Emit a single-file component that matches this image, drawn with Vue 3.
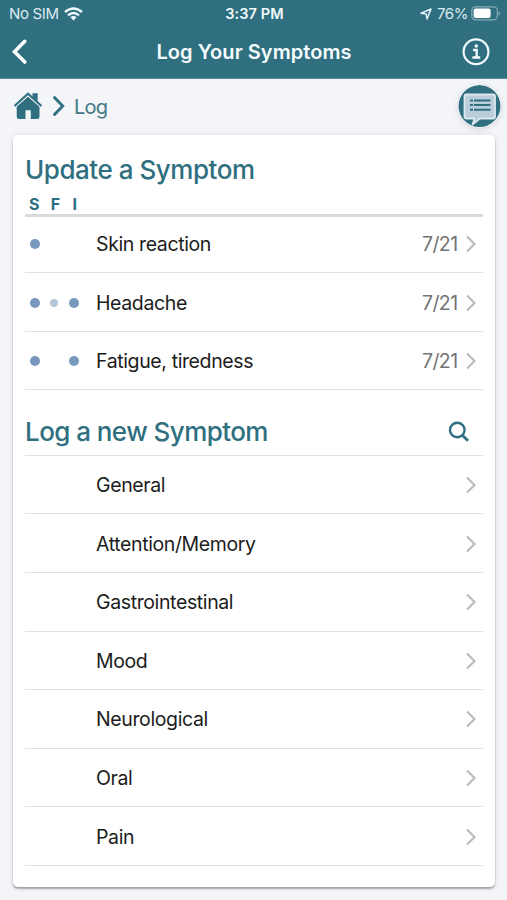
<script setup>
const recent = [
  { name: 'Skin reaction', date: '7/21', dots: ['large', '', ''] },
  { name: 'Headache', date: '7/21', dots: ['large', 'small', 'large'] },
  { name: 'Fatigue, tiredness', date: '7/21', dots: ['large', '', 'large'] }
]
const categories = ['General', 'Attention/Memory', 'Gastrointestinal', 'Mood', 'Neurological', 'Oral', 'Pain']
</script>

<template>
  <div class="screen">
    <header class="top">
      <div class="status">
        <div class="carrier">
          <span class="sim">No SIM</span>
          <svg class="wifi" width="19" height="14" viewBox="0 0 19 14" fill="none" stroke="#f2fbff" stroke-width="2.4">
            <path d="M1 5Q9.5-2.2 18 5" />
            <path d="M4 8.3Q9.500 3.500 15 8.300" />
            <path d="M6.400 10.200Q9.500 7.600 12.600 10.200L9.500 13.500Z" fill="#f2fbff" stroke="none" />
          </svg>
        </div>
        <span class="clock">3:37 PM</span>
        <div class="power">
          <svg class="arrow" width="12" height="12" viewBox="0 0 12 12" fill="none" stroke="#e4f3f7" stroke-width="1.5" stroke-linejoin="round">
            <path d="M1 5.300L11 1L7 11L6.200 5.900Z" />
          </svg>
          <span class="percent">76%</span>
          <svg class="battery" width="30" height="15" viewBox="0 0 30 15">
            <rect x=".8" y=".8" width="25.500" height="13" rx="3.600" fill="none" stroke="#86aab5" stroke-width="1.200" />
            <rect x="2.600" y="2.600" width="17" height="9.400" rx="2" fill="#fff" />
            <path d="M27.600 5q3 2.300 0 4.600z" fill="#86aab5" />
          </svg>
        </div>
      </div>
      <nav class="nav">
        <svg width="18" height="28" viewBox="0 0 18 28" fill="none" stroke="#fff" stroke-width="3.600" stroke-linecap="round">
          <path d="M14.800 3.300L4.500 13.700L14.800 24" />
        </svg>
        <h1>Log Your Symptoms</h1>
        <svg width="28" height="28" viewBox="0 0 28 28" fill="none" stroke="#f2fbff">
          <circle cx="14" cy="13.700" r="12.400" stroke-width="2.200" />
          <path d="M11 12H14.700V19.400M10.400 19.500H18.200" stroke-width="2.300" />
          <circle cx="14.300" cy="8" r="1.800" fill="#f2fbff" stroke="none" />
        </svg>
      </nav>
    </header>

    <div class="crumbs">
      <svg class="home" width="30" height="28" viewBox="0 0 30 28">
        <path d="M3.700 14.600L15 4.600L26.500 14.600V24.800Q26.500 27 24.300 27H17.800V18.200H12.500V27H5.900Q3.700 27 3.700 24.800Z" fill="#2f6f80" />
        <path d="M19.500 1.300H24.700V10L19.500 5Z" fill="#2f6f80" />
        <path d="M2 15.700L15 4L28 15.700" fill="none" stroke="#f3f5f8" stroke-width="1" />
        <path d="M1.500 14L15 1.800L28.500 14" fill="none" stroke="#2f6f80" stroke-width="2.200" />
      </svg>
      <svg class="sep" width="14" height="22" viewBox="0 0 14 22" fill="none" stroke="#2f6f80" stroke-width="2.900" stroke-linecap="round">
        <path d="M2.500 2.500L10.700 11L2.500 19.500" />
      </svg>
      <span class="crumb">Log</span>
      <svg class="chat" width="43" height="43" viewBox="0 0 43 43">
        <circle cx="21.500" cy="21" r="21" fill="#2f6f80" />
        <path d="M8.500 9.500H35Q37 9.500 37 11.500V31.500Q37 33.500 35 33.500H22L14.500 39.500L16.500 33.500H8.500Q6.500 33.500 6.500 31.500V11.500Q6.500 9.500 8.500 9.500Z" fill="#bacdda" stroke="#dce8f0" stroke-width="1.800" stroke-linejoin="round" />
        <path d="M12 15.500H32.500M12 20.100H32.500M12 24.700H32.500" stroke="#2f6f80" stroke-width="2" stroke-dasharray="3 1 17 2" />
      </svg>
    </div>

    <main class="card">
      <h2 class="update">Update a Symptom</h2>
      <div class="legend"><b>S</b><b>F</b><b>I</b></div>
      <ul class="rows recent">
        <li v-for="item in recent" :key="item.name">
          <span class="dots"><i v-for="(dot, n) in item.dots" :key="n" :class="dot"></i></span>
          <span class="name">{{ item.name }}</span>
          <span class="date">{{ item.date }}</span>
          <svg class="chevron" width="12" height="18" viewBox="0 0 12 18"><path d="M2 1.500L9.500 9L2 16.500" /></svg>
        </li>
      </ul>
      <div class="new">
        <h2>Log a new Symptom</h2>
        <svg width="22" height="22" viewBox="0 0 22 22" fill="none" stroke="#2f6f80" stroke-width="2.400">
          <circle cx="9.300" cy="9" r="7.300" />
          <path d="M14.400 14.200L20 19.800" stroke-width="2.800" />
        </svg>
      </div>
      <ul class="rows">
        <li v-for="name in categories" :key="name">
          <span class="dots"></span>
          <span class="name">{{ name }}</span>
          <svg class="chevron" width="12" height="18" viewBox="0 0 12 18"><path d="M2 1.500L9.500 9L2 16.500" /></svg>
        </li>
      </ul>
    </main>
  </div>
</template>

<style>
body { margin: 0; background: #f3f5f8; }
</style>

<style scoped>
* { box-sizing: border-box; }
.screen { height: 900px; overflow: hidden; background: #f3f5f8; font-family: Inter, "Liberation Sans", sans-serif; color: #1c1c1c; }
.screen svg { display: block; flex: none; }
.top { height: 79px; background: #2f6f80; border-bottom: 1px solid #55899a; color: #f4fbfd; }
.status { display: grid; grid-template-columns: 1fr auto 1fr; align-items: center; height: 27px; padding: 0 7px 0 9px; font-size: 15px; line-height: 20px; }
.carrier, .power { display: flex; align-items: center; }
.sim { width: 49px; letter-spacing: -.35px; white-space: nowrap; color: #dcebf0; }
.wifi { margin-left: 6px; }
.clock { font-weight: 600; font-size: 14.500px; letter-spacing: .1px; }
.power { justify-content: flex-end; }
.arrow { margin-right: 5px; }
.percent { margin-right: 3px; color: #dcebf0; letter-spacing: -.4px; }
.battery { margin-right: -1px; }
.nav { display: flex; align-items: center; justify-content: space-between; height: 50px; padding: 0 17px 0 10px; }
.nav h1 { margin: 0 0 0 18px; font-size: 20px; line-height: 28px; font-weight: 600; letter-spacing: .06px; }
.crumbs { display: flex; align-items: center; height: 56px; padding: 0 6px 2px 13px; }
.sep { margin-left: 9px; }
.crumb { margin: 2px 0 0 8px; font-size: 20px; letter-spacing: -.8px; color: #427786; }
.chat { margin-left: auto; border-radius: 50%; box-shadow: 0 1px 6px #0002; }
.card { width: 482px; height: 752px; margin-left: 13px; padding: 0 12px; background: #fff; border-radius: 5px; box-shadow: 0 2px 2px #0000004d, 0 0 6px #00000018; }
h2 { margin: 0; font-size: 26px; line-height: 34px; font-weight: 500; letter-spacing: -.46px; color: #2f6f80; }
.update { padding-top: 18px; }
.legend { display: flex; height: 30px; padding: 6px 0 0 4px; border-bottom: 3px solid #d9dada; font-size: 16px; line-height: 22px; color: #2f6f80; }
.legend b { width: 21.800px; }
.rows { margin: 0; padding: 0; list-style: none; }
.rows li { display: flex; align-items: center; height: 58.600px; padding: 1px 6.500px 0 0; border-bottom: 1.500px solid #e1e2e4; font-size: 19.500px; }
.recent li { padding-top: 2px; }
.recent li:first-child { height: 56px; padding-top: 0; padding-bottom: 1px; }
.dots { display: flex; width: 71px; }
.dots i { display: flex; width: 19.500px; height: 10px; align-items: center; justify-content: center; }
.dots i::before { content: ""; border-radius: 50%; }
.dots i.large::before { width: 10px; height: 10px; background: #7898bd; }
.dots i.small::before { width: 8px; height: 8px; background: #b3c7d8; }
.name { flex: 1; letter-spacing: -.38px; }
.date { margin-right: 7px; color: #737373; letter-spacing: -.6px; }
.chevron { fill: none; stroke: #bcbdc0; stroke-width: 2.200; }
.new { display: flex; align-items: flex-end; justify-content: space-between; height: 65.600px; padding: 0 13.500px 6px 0; border-bottom: 1.500px solid #e1e2e4; }
.new h2 { letter-spacing: -.56px; }
.new svg { margin-bottom: 5.500px; }
</style>
